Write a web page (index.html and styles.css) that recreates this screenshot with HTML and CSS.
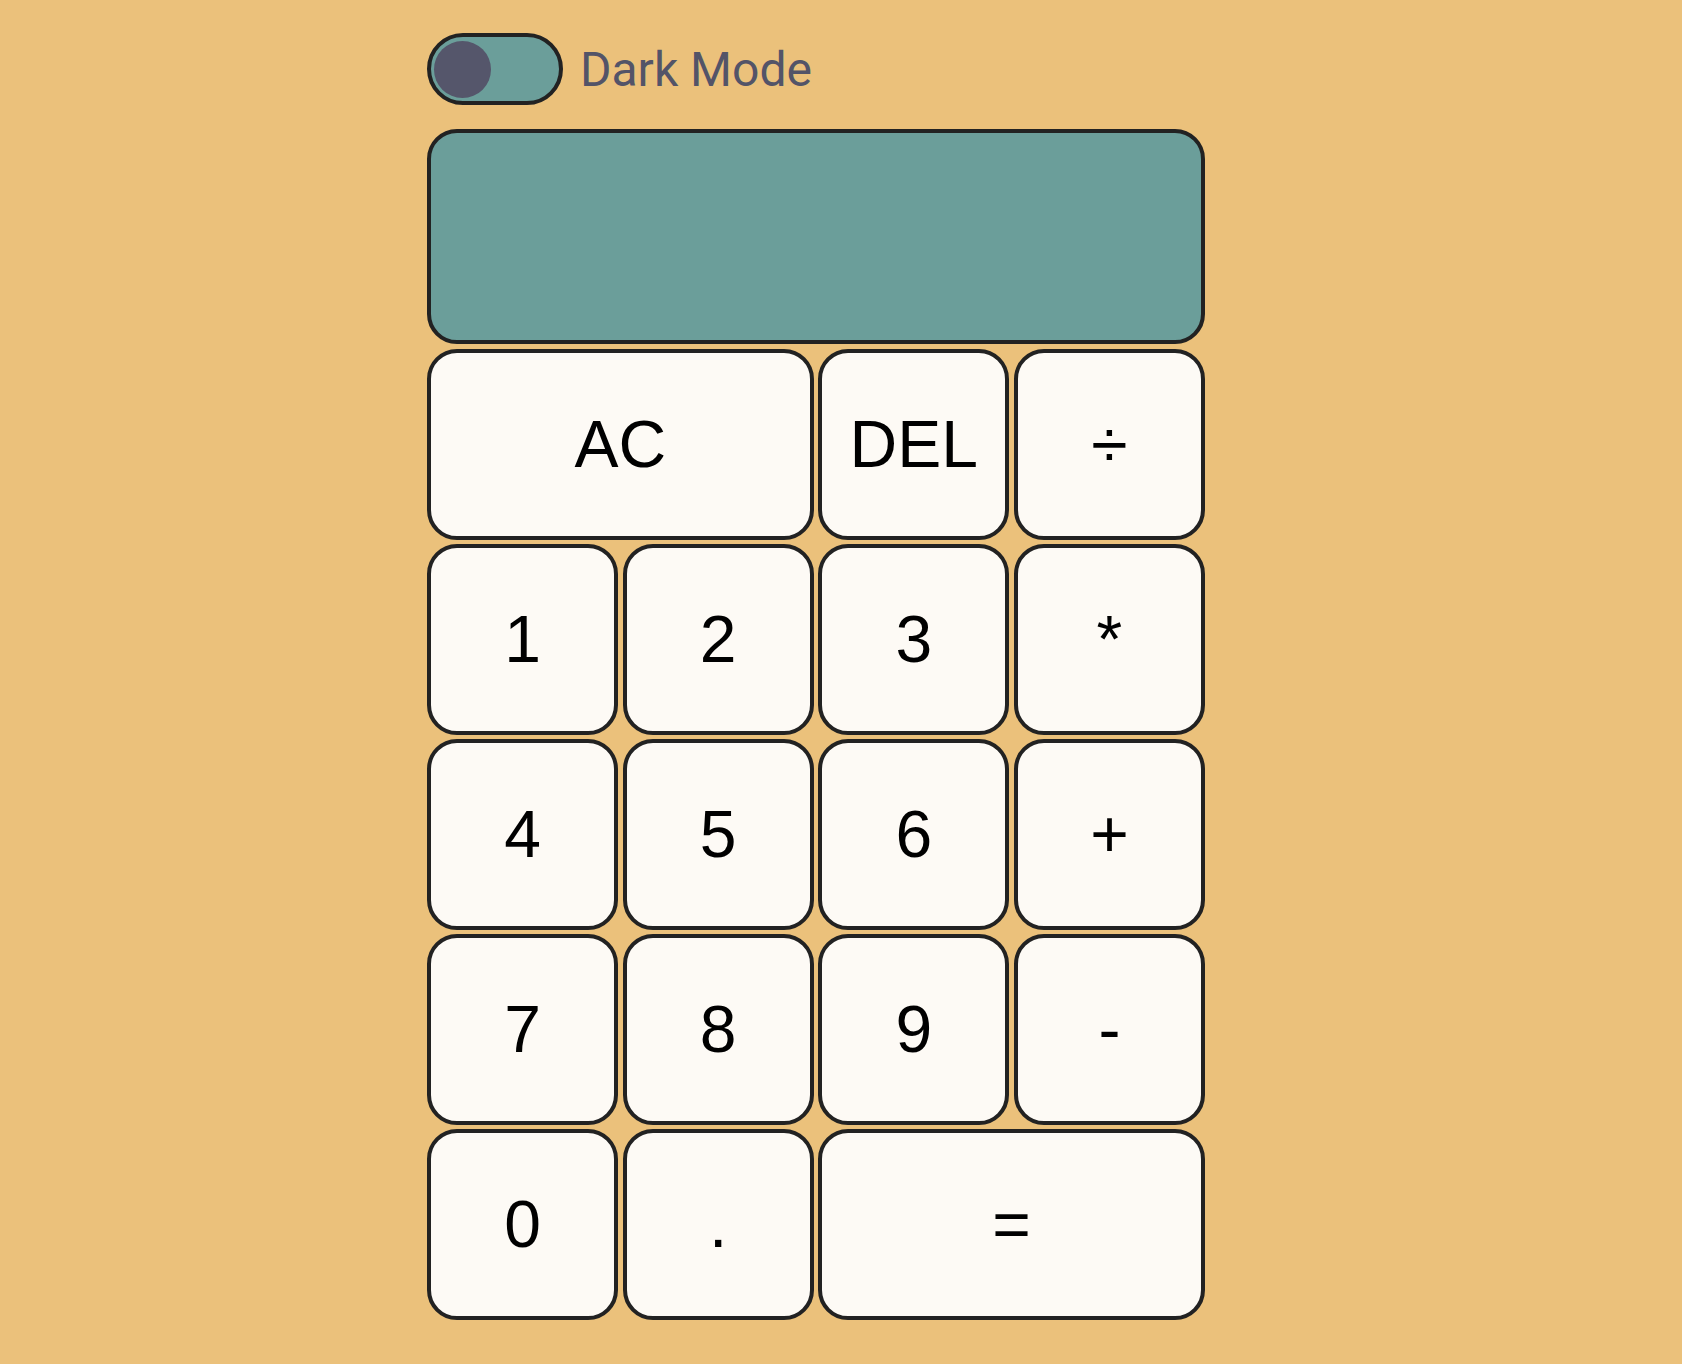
FILE: index.html
```html
<!DOCTYPE html>
<html>
<head>
<meta charset="utf-8">
<link rel="stylesheet" href="styles.css">
</head>
<body>
<div class="app">
  <div class="mode-row">
    <div class="toggle"><span class="knob"></span></div>
    <span class="mode-label">Dark Mode</span>
  </div>
  <div class="display"></div>
  <div class="keys">
    <button class="key wide">AC</button>
    <button class="key">DEL</button>
    <button class="key">÷</button>
    <button class="key">1</button>
    <button class="key">2</button>
    <button class="key">3</button>
    <button class="key">*</button>
    <button class="key">4</button>
    <button class="key">5</button>
    <button class="key">6</button>
    <button class="key">+</button>
    <button class="key">7</button>
    <button class="key">8</button>
    <button class="key">9</button>
    <button class="key">-</button>
    <button class="key">0</button>
    <button class="key">.</button>
    <button class="key wide">=</button>
  </div>
</div>
</body>
</html>
```
FILE: styles.css
```css
html, body {
  margin: 0;
  padding: 0;
  background: #ebc17b;
}
body {
  min-height: 1364px;
}
.app {
  width: 778px;
  margin-left: 427px;
  padding-top: 33px;
}
.mode-row {
  display: flex;
  align-items: center;
  gap: 17px;
}
.toggle {
  box-sizing: border-box;
  width: 136px;
  height: 72px;
  border: 4px solid #222;
  border-radius: 36px;
  background: #6b9e9a;
  display: flex;
  align-items: center;
  padding-left: 3px;
}
.knob {
  width: 57px;
  height: 57px;
  border-radius: 50%;
  background: #55566b;
}
.mode-label {
  font-family: Roboto, "Liberation Sans", sans-serif;
  font-size: 48px;
  color: #535468;
  line-height: 1;
  margin-top: 1px;
}
.display {
  box-sizing: border-box;
  margin-top: 24px;
  height: 215px;
  border: 4px solid #222;
  border-radius: 30px;
  background: #6b9e9a;
}
.keys {
  margin-top: 5px;
  display: grid;
  grid-template-columns: repeat(4, 1fr);
  grid-auto-rows: 190.5px;
  gap: 4.5px;
}
.key {
  box-sizing: border-box;
  margin: 0;
  padding: 0;
  border: 4px solid #222;
  border-radius: 30px;
  background: #fdfaf5;
  color: #000;
  font-family: "Liberation Sans", Arial, sans-serif;
  font-size: 66px;
  line-height: 1;
  display: flex;
  align-items: center;
  justify-content: center;
}
.wide {
  grid-column: span 2;
}
```
